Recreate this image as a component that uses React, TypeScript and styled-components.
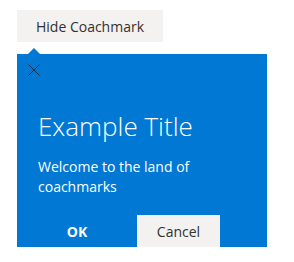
import React from "react";
import styled, { createGlobalStyle } from "styled-components";

const Global = createGlobalStyle`
  html, body { margin: 0; padding: 0; background: #ffffff; }
  body { font-family: "Segoe UI", "Open Sans", "Noto Sans", sans-serif; }
`;

const Page = styled.div`
  display: flex;
  flex-direction: column;
  align-items: flex-start;
  padding: 10px 0 0 17px;
`;

const TargetButton = styled.button`
  height: 32px;
  width: 146px;
  border: none;
  background: #f3f2f1;
  color: #323130;
  font-family: inherit;
  font-size: 14px;
  font-weight: 500;
  padding: 0;
  cursor: pointer;
`;

const Bubble = styled.div`
  position: relative;
  margin-top: 12px;
  width: 250px;
  height: 193px;
  background: #0078d4;
  display: flex;
  flex-direction: column;
`;

const Beak = styled.div`
  position: absolute;
  left: 11px;
  top: -6px;
  width: 0;
  height: 0;
  border-left: 6px solid transparent;
  border-right: 6px solid transparent;
  border-bottom: 6px solid #0078d4;
`;

const CloseButton = styled.button`
  width: 34px;
  height: 32px;
  border: none;
  background: transparent;
  padding: 0;
  display: flex;
  align-items: center;
  justify-content: center;
  cursor: pointer;
`;

const Content = styled.div`
  display: flex;
  flex-direction: column;
  padding: 0 20px 0 21px;
`;

const Title = styled.div`
  margin-top: 22px;
  font-size: 26px;
  font-weight: 300;
  line-height: 36px;
  color: #ffffff;
`;

const Body = styled.div`
  margin-top: 13px;
  font-size: 14px;
  line-height: 20px;
  color: #ffffff;
  width: 170px;
`;

const Footer = styled.div`
  margin-top: 18px;
  display: flex;
  gap: 21px;
`;

const FooterButton = styled.button<{ $primary?: boolean }>`
  height: 32px;
  width: ${(p) => (p.$primary ? "78px" : "83px")};
  border: none;
  padding: 0;
  font-family: inherit;
  font-size: 14px;
  font-weight: ${(p) => (p.$primary ? 700 : 400)};
  background: ${(p) => (p.$primary ? "transparent" : "#f3f2f1")};
  color: ${(p) => (p.$primary ? "#ffffff" : "#323130")};
  cursor: pointer;
`;

export default function App() {
  return (
    <>
      <Global />
      <Page>
        <TargetButton>Hide Coachmark</TargetButton>
        <Bubble>
          <Beak />
          <CloseButton aria-label="Close">
            <svg width="12" height="12" viewBox="0 0 12 12">
              <path d="M0.5 0.5 L11.5 11.5 M11.5 0.5 L0.5 11.5" stroke="#1f2b3a" strokeWidth="1" fill="none" />
            </svg>
          </CloseButton>
          <Content>
            <Title>Example Title</Title>
            <Body>Welcome to the land of coachmarks</Body>
            <Footer>
              <FooterButton $primary>OK</FooterButton>
              <FooterButton>Cancel</FooterButton>
            </Footer>
          </Content>
        </Bubble>
      </Page>
    </>
  );
}
